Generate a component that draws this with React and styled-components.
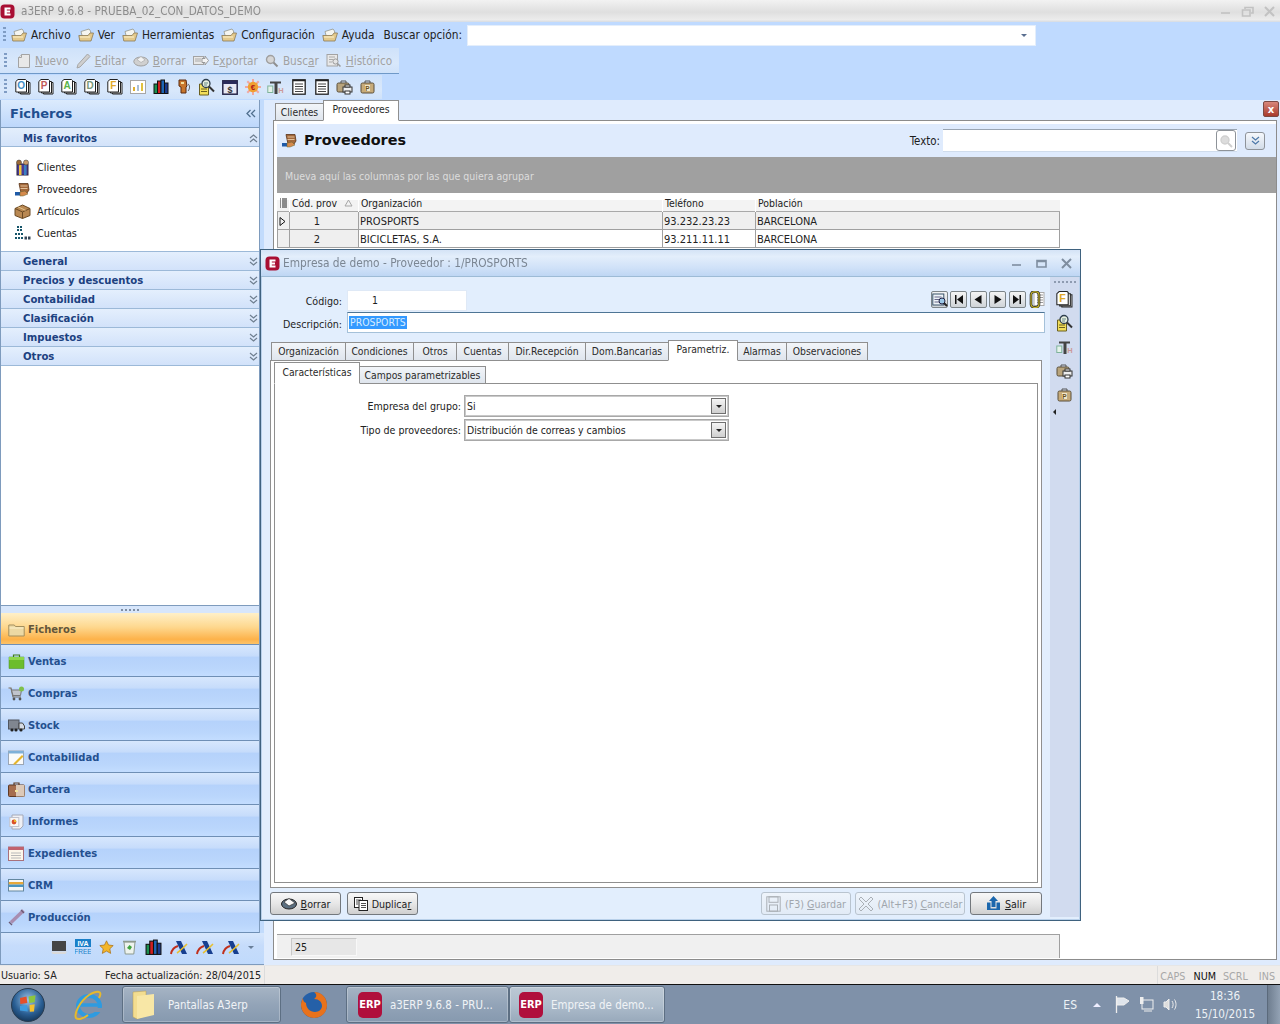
import React from 'react';
import styled, { createGlobalStyle } from 'styled-components';

const cond = `"DejaVu Sans Condensed","DejaVu Sans",sans-serif`;
const bold = `"DejaVu Sans",sans-serif`;

const Global = createGlobalStyle`
  html, body { margin: 0; padding: 0; width: 1280px; height: 1024px; overflow: hidden; }
  * { box-sizing: border-box; }
  #root { width: 1280px; height: 1024px; }
  svg { display: block; flex: none; }
`;

const Page = styled.div`
  width: 1280px; height: 1024px; display: flex; flex-direction: column;
  font-family: ${cond}; font-size: 10.3px; color: #1c1c1c; background: #bfdaff;
`;
const TitleBar = styled.div`
  height: 22px; display: flex; align-items: center; padding: 0 4px 0 0; gap: 6px;
  background: linear-gradient(#f2f2f2, #dfdfdf 55%, #ececec 90%, #d6dbe2);
  color: #8d8d8d; font-size: 11.6px;
`;
const TitleText = styled.span`flex: 1; filter: blur(.2px);`;
const DlgTitleText = styled.span`flex: 1; font-size: 11.8px; margin-left: -3px; filter: blur(.2px);`;
const WinCtl = styled.div`display: flex; align-items: center; gap: ${p => p.$gap || 9}px;`;

const Dock = styled.div`height: 78px; background: #bfdaff; display: flex; flex-direction: column; position: relative;`;
const MenuBar = styled.div`height: 26px; display: flex; align-items: center; padding-left: 3px; font-size: 11.8px; color: #222;`;
const Grip = styled.span`
  width: 3px; height: 16px; margin-right: ${p => p.$mr || 5}px; flex: none;
  background: repeating-linear-gradient(#7f9cc4 0 2px, transparent 2px 4px);
`;
const MenuItem = styled.span`display: flex; align-items: center; gap: 4px; margin-right: 7px; white-space: nowrap;`;
const MenuLabel = styled.span`margin: 0 5px 0 2px; white-space: nowrap;`;
const SearchBox = styled.div`
  width: 569px; height: 21px; background: #fff; border: 1px solid #e4eefb; display: flex;
  align-items: center; justify-content: flex-end; padding-right: 8px;
`;
const DownTri = styled.i`
  display: block; width: 0; height: 0; border: 3px solid transparent; border-top: 3px solid ${p => p.$c || '#5a6f90'}; border-bottom: 0;
`;
const ToolRow = styled.div`
  width: ${p => p.$w}px; height: ${p => p.$h}px; display: flex; align-items: center; padding-left: 4px;
  background: linear-gradient(#cfe2fa, #d9e8fb 60%, #cfe2fa); border-bottom: 1px solid ${p => p.$line};
  margin-top: ${p => p.$mt || 0}px; color: #a2a2a2; font-size: 11.7px;
`;
const ToolItem = styled.span`display: flex; align-items: center; gap: 4px; margin-right: 7px; white-space: nowrap;`;
const IconCell = styled.span`width: 23px; height: 18px; display: flex; align-items: center; justify-content: center;`;
const U = styled.span`text-decoration: underline;`;

const Main = styled.div`flex: 1; display: flex; position: relative; min-height: 0;`;

const Sidebar = styled.div`width: 264px; display: flex; flex-direction: column; background: #c2dbfc;`;
const SideInner = styled.div`width: 260px; flex: 1; display: flex; flex-direction: column; background: #fff; border-left: 1px solid #7e9bbd; border-right: 1px solid #7e9bbd; min-height: 0;`;
const SideHead = styled.div`
  height: 28px; display: flex; align-items: center; justify-content: space-between; padding: 0 3px 0 9px;
  background: linear-gradient(#dcebfd, #bdd7fb); border-bottom: 1px solid #7f9dc0;
  font: bold 13px ${bold}; color: #1f4f8f;
`;
const Group = styled.div`
  height: 19px; flex: none; display: flex; align-items: center; justify-content: space-between; padding: ${p => p.$open ? 2 : 0}px 1px 0 22px;
  background: ${p => p.$open ? 'linear-gradient(#e3eefc,#d3e3fa)' : 'linear-gradient(#e4effd,#d2e2fa)'};
  border-bottom: 1px solid #9cb9d8; font: bold 10.1px ${bold}; color: #1c4180;
`;
const FavList = styled.div`height: 105px; padding-top: 9px; flex: none; border-bottom: 1px solid #9cb9d8;`;
const FavItem = styled.div`height: 22px; display: flex; align-items: center; gap: 6px; padding-left: 13px; font-size: 10.8px; color: #222;`;
const Spacer = styled.div`flex: 1;`;
const Splitter = styled.div`
  height: 8px; flex: none; border-top: 1px solid #7e9bbd; background: #d7e6fb; display: flex; justify-content: center; align-items: center;
`;
const Dots = styled.span`width: 19px; height: 2px; background: repeating-linear-gradient(90deg, #7f8ea3 0 2px, transparent 2px 4px);`;
const NavItem = styled.div`
  height: 32px; flex: none; display: flex; align-items: center; gap: 3px; padding: 2px 0 0 6px;
  border-bottom: 1px solid #6f8fb5;
  background: ${p => p.$active
    ? 'linear-gradient(#fff0c8, #fed88f 45%, #fdb24a 85%, #fcc36a)'
    : 'linear-gradient(#d7e7fd, #c6dcfb 35%, #b5d2fb 40%, #bad6fc 75%, #c3ddff)'};
  font: bold 10px ${bold}; color: ${p => p.$active ? '#63553a' : '#24508f'};
`;
const NavIcon = styled.span`width: 18px; display: flex; justify-content: center;`;
const NavFoot = styled.div`
  width: 264px; height: 32px; flex: none; display: flex; align-items: center; padding: 0 0 3px 50px; gap: 8px;
  background: linear-gradient(#d7e7fd, #c6dcfb 40%, #c0dafc);
  border-left: 1px solid #7e9bbd; border-bottom: 1px solid #7e9bbd;
`;

const Content = styled.div`flex: 1; display: flex; flex-direction: column; background: #dfebfd; min-width: 0; position: relative;`;
const CloseRed = styled.div`
  position: absolute; right: 1px; top: 1px; width: 16px; height: 16px; border-radius: 2px; background: linear-gradient(#d8877a, #a93a2c);
  border: 1px solid #7b4a44; color: #fff; font: bold 10px ${bold}; display: flex; align-items: center; justify-content: center;
`;
const Tabs = styled.div`display: flex; align-items: flex-end; height: ${p => p.$h}px; flex: none; padding-left: ${p => p.$pl || 0}px; margin-top: ${p => p.$mt || 0}px; position: relative; z-index: 1; margin-bottom: -1px;`;
const Tab = styled.div`
  width: ${p => p.$w}px; height: ${p => p.$active ? p.$ah : p.$ih}px; display: flex; align-items: center; justify-content: center;
  border: 1px solid #8f8f8f; margin-left: -1px; position: relative; z-index: ${p => p.$active ? 2 : 0};
  background: ${p => p.$active ? '#fff' : 'linear-gradient(#f2f5f9,#dfe5ed)'};
  border-bottom: ${p => p.$active ? '1px solid #fff' : '1px solid #8f8f8f'};
  padding-bottom: ${p => p.$active ? 3 : (p.$ib || 0)}px; white-space: nowrap; color: #2b2b2b; font-size: 10.3px;
`;
const Panel = styled.div`
  flex: 1; margin: 0 3px 5px 9px; border: 1px solid #8c8c8c; background: #fff; padding: 3px 0 1px 3px; display: flex; flex-direction: column; min-height: 0;
`;
const ListHead = styled.div`height: 33px; flex: none; background: #dfebfd; display: flex; align-items: center; padding-left: 4px; position: relative;`;
const ListTitle = styled.div`font: bold 14.4px ${bold}; color: #101010; margin-left: 6px; flex: 1; padding-bottom: 2px;`;
const TextLabel = styled.span`font-size: 11.4px; margin-right: 3px;`;
const TextInput = styled.div`
  width: 294px; height: 23px; background: #fff; border-top: 1px solid #9aa5b2; border-bottom: 1px solid #cfdcec; display: flex; justify-content: flex-end; align-items: center; padding-right: 1px;
`;
const MiniBtn = styled.div`
  width: ${p => p.$w}px; height: ${p => p.$h}px; border: 1px solid #8e9399; border-radius: 3px; display: flex; align-items: center; justify-content: center;
  background: ${p => p.$plain ? '#fff' : 'linear-gradient(#f5f8fc,#d2dce8)'}; margin-left: ${p => p.$ml || 0}px; margin-right: ${p => p.$mr || 0}px;
`;
const GroupBand = styled.div`height: 36px; flex: none; background: #a0a0a0; color: #dcdcdc; display: flex; align-items: center; padding: 2px 0 0 8px; font-size: 10.5px;`;
const GridArea = styled.div`flex: 1; display: flex; flex-direction: column; width: 783px; min-height: 0;`;
const GridHead = styled.div`
  display: grid; grid-template-columns: 12px 69px 304px 93px 305px; height: 19px; flex: none; align-items: end;
  background: linear-gradient(#fff 0 7px, #f3f3f3 7px); border-bottom: 1px solid #a9a9a9; font-size: 10.4px; color: #222;
`;
const HeadCell = styled.div`
  height: 19px; display: flex; align-items: center; justify-content: ${p => p.$between ? 'space-between' : 'flex-start'};
  padding: 0 ${p => p.$between ? 5 : 0}px 0 2px; border-left: ${p => p.$noline ? 0 : '1px solid #fff'}; white-space: nowrap; overflow: hidden;
`;
const Row = styled.div`
  display: grid; grid-template-columns: 12px 69px 304px 93px 305px; height: 18px; flex: none; background: ${p => p.$sel ? '#efefef' : '#fff'};
  border-bottom: 1px solid #a0a0a0; border-right: 1px solid #a0a0a0; font-size: 11px; color: #222;
`;
const Cell = styled.div`
  border-left: 1px solid #a0a0a0; display: flex; align-items: center; padding: 2px ${p => p.$center ? 14 : 0}px 0 ${p => p.$center ? 0 : 1}px; white-space: nowrap;
  justify-content: ${p => p.$center ? 'center' : 'flex-start'}; background: ${p => p.$grey ? '#efefef' : 'transparent'};
`;
const GridFoot = styled.div`
  margin-top: auto; height: 24px; flex: none; background: #f0f0f0; border-top: 1px solid #a0a0a0; border-right: 1px solid #a0a0a0; padding: 3px 0 0 14px;
`;
const SumCell = styled.div`width: 66px; height: 18px; background: #e7e7e7; border: 1px solid #c8c8c8; border-right-color: #f8f8f8; border-bottom-color: #f8f8f8; padding-left: 3px; line-height: 16px; font-size: 10.6px;`;

const Dialog = styled.div`
  position: absolute; left: 260px; top: 149px; width: 821px; height: 672px; display: flex; flex-direction: column;
  border: 1px solid #3f627f; background: #e2eefd; box-shadow: inset 0 0 0 1px #b8d0ea; z-index: 5;
`;
const DlgTitle = styled.div`
  height: 27px; flex: none; display: flex; align-items: center; padding: 0 7px 0 4px; gap: 6px;
  background: linear-gradient(#d4e3f6, #e3eefb 25%, #cfe1f8 70%, #bed6f4); border-bottom: 1px solid #9dbbd6;
  color: #7b8693;
`;
const DlgBody = styled.div`flex: 1; display: flex; min-height: 0;`;
const Form = styled.div`flex: 1; display: flex; flex-direction: column; padding: 13px 5px 0 9px; min-width: 0;`;
const CodeRow = styled.div`display: flex; align-items: center; height: 21px; margin-left: -9px;`;
const FieldLabel = styled.label`width: ${p => p.$w}px; flex: none; text-align: right; padding-right: 5px; padding-top: ${p => p.$pt || 0}px; font-size: 10.6px; color: #222;`;
const CodeInput = styled.div`width: 120px; height: 21px; background: #fff; border: 1px solid #dfe9f6; padding-left: 24px; line-height: 19px; font-size: 10.4px;`;
const NavBtns = styled.div`margin-left: auto; margin-top: -2px; display: flex; align-items: center; gap: 2.4px;`;
const NavBtn = styled.div`
  width: 17px; height: 17px; border: 1px solid #7d8589; border-radius: 2px; background: linear-gradient(#f4f4f4,#cfd4d8); display: flex; align-items: center; justify-content: center;
`;
const DescRow = styled.div`display: flex; align-items: center; height: 21px; margin: 1px 0 0 -9px;`;
const DescInput = styled.div`flex: 1; height: 21px; background: #fff; border: 1px solid #a5c1d9; border-top-color: #4e7595; padding-left: 1px; display: flex; align-items: center; font-size: 10.4px;`;
const Sel = styled.span`background: #3399ff; color: #d6ecff; padding: 0 1px; height: 13px; line-height: 13px;`;
const TabPanel = styled.div`
  width: 772px; height: 528px; flex: none; border: 1px solid #8f8f8f; background: #fff; padding: 1px 3px 4px 3px; display: flex; flex-direction: column;
`;
const InnerBox = styled.div`flex: 1; border: 1px solid #8f8f8f; padding: 11px 0 0 0; position: relative;`;
const FieldRow = styled.div`display: flex; align-items: center; height: 22px; margin-bottom: 2px;`;
const Combo = styled.div`
  width: 265px; height: 22px; border: 2px solid #c9c9c9; outline: 1px solid #a8a8a8; outline-offset: -1px; background: #fff;
  margin-left: -2px; display: flex; align-items: center; justify-content: space-between; padding: 0 1px 0 1px; font-size: 10.4px; color: #222;
`;
const ComboBtn = styled.div`
  width: 15px; height: 16px; border: 1px solid #6f6f6f; background: linear-gradient(#f5f5f5,#cfcfcf); display: flex; align-items: center; justify-content: center;
`;
const BtnRow = styled.div`display: flex; margin-top: 4px; width: 772px; align-items: center;`;
const Btn = styled.div`
  width: ${p => p.$w}px; height: 23px; flex: none; border: 1px solid ${p => p.$off ? '#b9c4cf' : '#73787d'}; border-radius: 3px; margin-left: ${p => p.$ml || 0}px;
  background: ${p => p.$off ? 'linear-gradient(#eef4fb,#e2ebf6)' : 'linear-gradient(#f8f8f8,#e7e7e7 50%,#cfcfcf)'}; color: ${p => p.$off ? '#a0a6ad' : '#222'};
  display: flex; align-items: center; justify-content: center; gap: 4px; font-size: 10.6px; white-space: nowrap;
`;
const DlgTools = styled.div`
  width: 29px; flex: none; background: #d1dbef; margin: 0 1px 3px 0; display: flex; flex-direction: column; align-items: center; padding-top: 2px; position: relative;
`;
const DlgDots = styled.span`width: 22px; height: 2px; margin: 2px 0 4px; background: repeating-linear-gradient(90deg, #8e9bb0 0 2px, transparent 2px 4px);`;
const DlgTool = styled.div`height: 24px; display: flex; align-items: center; justify-content: center;`;
const LeftTri = styled.i`
  display: block; width: 0; height: 0; align-self: flex-start; margin: 2px 0 0 3px; border: 3px solid transparent; border-right: 3px solid #222; border-left: 0;
`;

const Status = styled.div`
  height: 20px; flex: none; display: flex; align-items: center; background: #f0edea; border-top: 1px solid #e6e6e6; font-size: 10.7px; color: #222; border-bottom: 1px solid #111;
`;
const StatusCell = styled.span`width: ${p => p.$w}px; padding-left: ${p => p.$pl ?? 1}px; white-space: nowrap; height: 18px; line-height: 20px; border-right: 1px solid ${p => p.$line || 'transparent'};`;
const StatusKey = styled.span`margin-left: ${p => p.$ml || 0}px; margin-right: ${p => p.$mr || 0}px; padding-top: 2px; color: ${p => p.$on ? '#111' : '#a8a8a8'}; white-space: nowrap;`;
const StatusGap = styled.span`flex: 1; height: 18px; border-right: 1px solid #dcdcdc;`;

const Taskbar = styled.div`height: 39px; flex: none; background: #7f91a9; display: flex; align-items: center; position: relative; color: #eef2f6; font-size: 11.4px;`;
const Slot = styled.div`width: ${p => p.$w}px; flex: none; display: flex; justify-content: center;`;
const TaskBtn = styled.div`
  width: ${p => p.$w}px; height: 37px; flex: none; display: flex; align-items: center; gap: ${p => p.$gap}px; padding-left: ${p => p.$pl}px;
  background: ${p => p.$on ? 'linear-gradient(#bcc8d4,#aebdcc 50%,#98a9bb)' : 'linear-gradient(#a6b4c4,#93a4b8 50%,#8699af)'};
  border: 1px solid #5d6f83; border-radius: 3px; box-shadow: inset 0 0 0 1px rgba(255,255,255,.25); white-space: nowrap; color: #f0f3f6;
`;
const ErpTile = styled.span`
  width: 24px; height: 26px; border-radius: 5px; background: #b00f3c; color: #fff; font: bold 11px ${cond}; display: flex; align-items: center; justify-content: center;
`;
const Tray = styled.div`margin-left: auto; display: flex; align-items: center; height: 100%;`;
const Lang = styled.span`margin-right: 16px; font-size: 12px;`;
const UpTri = styled.i`display: block; width: 0; height: 0; border: 4px solid transparent; border-bottom: 4px solid #eef; border-top: 0; margin-right: 14px;`;
const Clock = styled.div`width: 70px; margin-left: 12px; text-align: center; line-height: 18px; font-size: 11.6px; margin-right: 7px;`;
const ShowDesk = styled.div`width: 13px; height: 39px; background: linear-gradient(90deg,#6f7e90,#93a2b4); border-left: 1px solid #5b6a7c;`;

/* ---- drawn icons ---- */
const Logo = () => (
  <svg width="15" height="15" viewBox="0 0 15 15"><rect x=".5" y=".5" width="14" height="14" rx="4" fill="#a90f33"/><path d="M4.500 3.500h6v2H6.800v1.100h3.200v1.800H6.800v1.100h3.700v2h-6z" fill="#fff"/></svg>
);
const Ctl = ({ k, c = '#c2c2c2' }) => (
  <svg width="13" height="11" viewBox="0 0 13 11" stroke={c} fill="none" strokeWidth="1.600">
    {k === 'min' && <path d="M2 7h9"/>}
    {k === 'max' && <path d="M2 2.500h9v6.500H2zM2 3.500h9" />}
    {k === 'res' && <path d="M1.500 4h7.500v6h-7.500zM4 3V1.500h8v5.500h-2"/>}
    {k === 'x' && <path d="M2 1l9 9M11 1l-9 9" strokeWidth="2"/>}
  </svg>
);
const FolderOpen = () => (
  <svg width="16" height="15" viewBox="0 0 16 15"><path d="M3 3.500l8-2.500 1.500 2 .5 3-8 5z" fill="#f5f5f0" stroke="#8b8b7b" strokeWidth=".7"/><path d="M.8 7.500h9.200l2-2.500h3.500L13 13H1.800z" fill="#e3c98c" stroke="#8c7a55" strokeWidth=".8"/><path d="M2 9h10" stroke="#fff3cf" strokeWidth="1"/></svg>
);
const Gray = { stroke: '#a3a3a3', fill: '#e8e8e8', strokeWidth: 1 };
const TNuevo = () => <svg width="15" height="16" viewBox="0 0 15 16"><path d="M5.500 1.500h8v13h-11v-10z" {...Gray}/><path d="M2.500 4.500h3v-3" {...Gray}/></svg>;
const TEditar = () => <svg width="15" height="16" viewBox="0 0 15 16"><path d="M11.500 1l2.500 2.500L4 14l-3 1 1-3.500z" fill="#cfcfcf" stroke="#a6a6a6"/></svg>;
const TBorrar = () => <svg width="16" height="14" viewBox="0 0 16 14"><ellipse cx="8" cy="7.500" rx="7.200" ry="4.500" fill="#d0d0d0" stroke="#a0a0a0"/><path d="M4 5.500l4-3 4 3.500-4 2.500z" fill="#f2f2f2" stroke="#aaa" strokeWidth=".7"/></svg>;
const TExportar = () => <svg width="16" height="13" viewBox="0 0 16 13"><rect x=".5" y="2.500" width="10" height="8" {...Gray}/><path d="M2 5h6M2 7h6" stroke="#aaa"/><path d="M9 4.500h3V2l3.500 4.500L12 11V8.500H9z" fill="#f4f4f4" stroke="#999"/></svg>;
const TBuscar = () => <svg width="14" height="14" viewBox="0 0 14 14"><circle cx="5.500" cy="5.500" r="4" fill="#d5d5d5" stroke="#a0a0a0" strokeWidth="1.400"/><path d="M8.500 8.500l4 4" stroke="#8f8f8f" strokeWidth="2"/></svg>;
const THistorico = () => <svg width="16" height="15" viewBox="0 0 16 15"><rect x="1" y="1.500" width="10.500" height="11.500" {...Gray}/><path d="M3 4h6M3 6.500h4M3 9h3" stroke="#aaa"/><circle cx="9.500" cy="8.500" r="2.600" fill="#e5e5e5" stroke="#999"/><path d="M11.500 10.500l3 3" stroke="#999" strokeWidth="1.500"/></svg>;

const DocStack = ({ l, c = '#555', size = 16 }) => (
  <svg width={size} height={size} viewBox="0 0 16 16">
    <path d="M7 3.500h8v11.500H5.500V3.500z" fill="#fff" stroke="#222"/>
    <path d="M5 2.500h8.500V14H3.500V2.500z" fill="#fff" stroke="#222"/>
    <path d="M3 .5h7.500l1 1V13H.8V2.500z" fill="#fff" stroke="#222"/>
    <text x="6.200" y="10.300" fontSize="10" fontWeight="700" textAnchor="middle" fontFamily="Liberation Sans, sans-serif" fill={c}>{l}</text>
  </svg>
);
const MiniChart = () => <svg width="16" height="14" viewBox="0 0 16 14"><rect x=".5" y=".5" width="15" height="13" fill="#fff" stroke="#a7a7a7"/><path d="M4 11V7" stroke="#e0b030" strokeWidth="2"/><path d="M8 11V5" stroke="#a9bfd8" strokeWidth="2"/><path d="M12 11V3" stroke="#e0c040" strokeWidth="2"/></svg>;
const Books = ({ size = 16 }) => <svg width={size} height={size} viewBox="0 0 16 16"><rect x="1" y="5" width="3.500" height="9.500" fill="#1a8f50" stroke="#111"/><rect x="4.500" y="2" width="3.500" height="12.500" fill="#d02020" stroke="#111"/><rect x="8" y="1" width="3.500" height="13.500" fill="#1f66b5" stroke="#111"/><rect x="11.500" y="4" width="3.500" height="10.500" fill="#1a3a8c" stroke="#111"/></svg>;
const Pump = () => <svg width="14" height="16" viewBox="0 0 14 16"><path d="M2 1h7l1 6-1 1v6H4V8L2 7z" fill="#c8762c" stroke="#5a2a10"/><rect x="4" y="3" width="3" height="2" fill="#f4e0a0"/><path d="M11 5c2 1 2 5 0 7" stroke="#555" fill="none"/></svg>;
const DocSearch = ({ size = 18 }) => <svg width={size} height={size} viewBox="0 0 18 18"><path d="M1.500 6h9v11h-9z" fill="#f2de5a" stroke="#6b6020"/><path d="M3 11h6M3 13.500h6" stroke="#6b6020"/><circle cx="8" cy="5.500" r="4" fill="#e8f0e0" stroke="#2f3f4f" strokeWidth="1.300"/><path d="M6 5h4M6 7h3" stroke="#688"/><path d="M11 8.500l5 5" stroke="#333" strokeWidth="2"/></svg>;
const DollarDoc = () => <svg width="16" height="15" viewBox="0 0 16 15"><rect x=".8" y=".8" width="14.400" height="13.400" fill="#e8e8f4" stroke="#26264a" strokeWidth="1.500"/><rect x="1" y="1" width="14" height="3" fill="#2a2a5a"/><text x="8" y="12.500" fontSize="9" fontWeight="700" textAnchor="middle" fontFamily="Liberation Sans, sans-serif" fill="#333">$</text></svg>;
const EuroGear = () => <svg width="16" height="16" viewBox="0 0 16 16"><g stroke="#f0a8a0" strokeWidth="2"><path d="M8 0v16M0 8h16M2.300 2.300l11.400 11.400M13.700 2.300L2.300 13.700"/></g><circle cx="8" cy="8" r="5.200" fill="#f0a030"/><text x="8" y="11" fontSize="8" fontWeight="700" textAnchor="middle" fontFamily="Liberation Sans, sans-serif" fill="#b01818">€</text></svg>;
const Dth = ({ size = 17 }) => <svg width={size} height={size} viewBox="0 0 17 15"><path d="M3 1.500h11v2h-3.500V14h-3V3.500H3z" fill="#444"/><rect x=".8" y="6" width="5" height="6.500" fill="#e5f2ea" stroke="#7fb39b"/><text x="14" y="12.500" fontSize="7.500" fontWeight="700" textAnchor="middle" fontFamily="Liberation Sans, sans-serif" fill="#c99">H</text></svg>;
const Lines = () => <svg width="14" height="16" viewBox="0 0 14 16"><rect x=".8" y=".8" width="12.400" height="14.400" fill="#fff" stroke="#222" strokeWidth="1.300"/><path d="M.8 1.500h12.400" stroke="#222" strokeWidth="1.500"/><path d="M3 5h8M3 7.500h8M3 10h8M3 12.500h8" stroke="#444"/></svg>;
const BagPrint = () => <svg width="17" height="16" viewBox="0 0 17 16"><path d="M5 4V2h5v2" fill="none" stroke="#555"/><rect x="1" y="4" width="12" height="9" rx="1.500" fill="#b9a47c" stroke="#5a4f3a"/><rect x="7" y="8" width="9" height="5" fill="#eee" stroke="#333"/><rect x="9" y="6" width="5" height="2" fill="#fff" stroke="#333"/><rect x="9" y="12" width="5" height="3" fill="#fff" stroke="#333"/></svg>;
const BagP = () => <svg width="15" height="14" viewBox="0 0 15 14"><path d="M5 3V1h5v2" fill="none" stroke="#555"/><rect x="1" y="3" width="13" height="10" rx="1.500" fill="#c7ab7a" stroke="#5a4f3a"/><rect x="5" y="5" width="5" height="6" fill="#f1e7c8"/><text x="7.500" y="10.500" fontSize="6.500" fontWeight="700" textAnchor="middle" fontFamily="Liberation Sans, sans-serif" fill="#6a5020">P</text></svg>;
const Chevrons = ({ up, c = '#6f7f90' }) => (
  <svg width="9" height="9" viewBox="0 0 9 9" fill="none" stroke={c} strokeWidth="1.200" style={up ? { transform: 'rotate(180deg)' } : undefined}><path d="M1 1l3.500 3L8 1M1 5l3.500 3L8 5"/></svg>
);
const LeftChev = () => <svg width="10" height="9" viewBox="0 0 10 9" fill="none" stroke="#51708f" strokeWidth="1.300"><path d="M4.500 1L1 4.500l3.500 3.500M9 1L5.500 4.500 9 8"/></svg>;

const IcoClientes = () => <svg width="17" height="17" viewBox="0 0 17 17"><rect x="3" y="5" width="11" height="11" fill="#4a3c98" stroke="#2c2340"/><rect x="5" y="6" width="2.500" height="10" fill="#f1c23a"/><rect x="10" y="6" width="2.500" height="10" fill="#3a80c0"/><circle cx="5" cy="3.500" r="2.500" fill="#9c6a3a" stroke="#333" strokeWidth=".5"/><circle cx="12" cy="3.500" r="2.500" fill="#c99a6a" stroke="#333" strokeWidth=".5"/></svg>;
const IcoProv = () => <svg width="17" height="15" viewBox="0 0 17 15"><path d="M5 1.500h9l1 6.500-2 3H7z" fill="#a3683a" stroke="#5a3418" strokeWidth=".8"/><path d="M6.500 4h7M6.500 6.500h7" stroke="#e3c09a"/><path d="M1 10h5v3.500H1z" fill="#1e5aa8"/><path d="M6 10l5-1 3 3-5 2H6z" fill="#d68a4c" stroke="#663" strokeWidth=".5"/></svg>;
const IcoArt = () => <svg width="17" height="15" viewBox="0 0 17 15"><path d="M1 4.500L8.500 1 16 4.500v7L8.500 14.500 1 11.500z" fill="#b98852" stroke="#6b4a24"/><path d="M1 4.500l7.500 3.500L16 4.500M8.500 8v6.500" fill="none" stroke="#6b4a24"/><path d="M4 2.800l7.500 3.500" stroke="#e5c58e"/></svg>;
const IcoCuentas = () => <svg width="17" height="16" viewBox="0 0 17 16" fill="#16556a"><path d="M3 1h2v2H3zM6 1h2v2H6zM3 4h2v2H3zM6 4h2v2H6zM1 8h2v2H1zM4 8h2v2H4zM7 8h2v2H7zM1 12h2v2H1zM4 12h2v2H4zM7 12h2v2H7z"/><path d="M10.500 11.500h2.500v3h-2.500zM14 11.500h2.500v3H14z" fill="#345"/></svg>;

const nav = {
  folder: <svg width="17" height="14" viewBox="0 0 17 14"><path d="M.8 2h5.500l1.200 1.500h8.700V13H.8z" fill="#ecd9a4" stroke="#a38f5e"/><path d="M1.500 5h14" stroke="#fbf0cc"/></svg>,
  bag: <svg width="17" height="15" viewBox="0 0 17 15"><path d="M1 3h15v11.500H1z" fill="#6cbd2c" stroke="#4a8f1c" strokeWidth=".5"/><path d="M5.500 4V1h6v3" fill="none" stroke="#3f7d15" strokeWidth="1.200"/><path d="M1 3h15v3H1z" fill="#8ed64a"/></svg>,
  cart: <svg width="17" height="15" viewBox="0 0 17 15"><path d="M.5 2h2.500l2 9h8" fill="none" stroke="#7a6f60" strokeWidth="1.200"/><path d="M3.500 4h10l-1 5.500H5z" fill="#c0c4cc" stroke="#777"/><circle cx="6" cy="13" r="1.400" fill="#555"/><circle cx="12" cy="13" r="1.400" fill="#555"/><circle cx="13.500" cy="3" r="2.500" fill="#7fc04a"/></svg>,
  truck: <svg width="17" height="13" viewBox="0 0 17 13"><rect x=".5" y="1" width="10.500" height="9" fill="#808690" stroke="#50555f"/><path d="M11 4h3.500L16.500 7v3H11z" fill="#d5dbe5" stroke="#444"/><circle cx="4" cy="11" r="1.600" fill="#222"/><circle cx="8" cy="11" r="1.600" fill="#222"/><circle cx="13" cy="11" r="1.600" fill="#222"/></svg>,
  pad: <svg width="17" height="15" viewBox="0 0 17 15"><rect x=".5" y="1" width="15" height="13.500" fill="#fafafa" stroke="#9ba6b4"/><path d="M.5 1h15v2.500H.5z" fill="#7fb0d8"/><path d="M6 13l8-8 1.500 1.500-8 8H5z" fill="#e5b52c"/></svg>,
  brief: <svg width="17" height="15" viewBox="0 0 17 15"><path d="M6 3V1h5v2" fill="none" stroke="#5d3a24" strokeWidth="1.200"/><rect x=".5" y="3" width="16" height="11.500" rx="1" fill="#a56d4e" stroke="#5f3a24"/><rect x="8" y="3" width="8.500" height="11.500" fill="#dcc9b8"/><rect x="7" y="8" width="3" height="2" fill="#f4e6a0"/></svg>,
  report: <svg width="15" height="16" viewBox="0 0 15 16"><path d="M3 1h11v11l-3 3H3z" fill="#eff0f5" stroke="#a5a9b7"/><rect x=".8" y="3.500" width="9" height="9" fill="#f7f7f7" stroke="#c2c2cc"/><circle cx="5" cy="8" r="2.400" fill="#d9502c"/><path d="M5 8V5.600A2.400 2.400 0 0 1 7.400 8z" fill="#e9b62c"/></svg>,
  cal: <svg width="16" height="15" viewBox="0 0 16 15"><rect x=".5" y="1" width="15" height="13.500" fill="#fdf7ea" stroke="#a8717c"/><rect x=".5" y="1" width="15" height="3" fill="#c1626e"/><path d="M3 7h10M3 9.500h10M3 12h10" stroke="#b8b8b8"/></svg>,
  crm: <svg width="17" height="13" viewBox="0 0 17 13"><rect x=".5" y=".5" width="15" height="11.500" fill="#f8f8f8" stroke="#63879f"/><rect x=".8" y="3" width="14.500" height="2.500" fill="#e9a83a"/><rect x=".8" y="5.500" width="14.500" height="2.500" fill="#4a93c2"/></svg>,
  wrench: <svg width="17" height="17" viewBox="0 0 17 17"><path d="M15.500 1.500L3 13.500" stroke="#a88db0" strokeWidth="3.400"/><path d="M13 1l3 3M1 13l3 3" stroke="#6d5a74" strokeWidth="1.400"/></svg>,
};
const Monitor = () => <svg width="16" height="15" viewBox="0 0 16 15"><rect x="1" y="1" width="14" height="10" fill="#454545"/><path d="M0 11.500h16L14.500 14h-13z" fill="#dadada"/></svg>;
const IvaFree = () => <svg width="16" height="16" viewBox="0 0 16 16"><rect width="16" height="8" fill="#1a7fc8"/><text x="8" y="7" fontSize="7" fontWeight="700" textAnchor="middle" fontFamily="Liberation Sans, sans-serif" fill="#fff">IVA</text><text x="8" y="15" fontSize="6.500" textAnchor="middle" fontFamily="Liberation Sans, sans-serif" fill="#1a7fc8">FREE</text></svg>;
const Star = () => <svg width="15" height="14" viewBox="0 0 15 14"><path d="M7.500.8l2 4.200 4.700.6-3.400 3.200.9 4.600-4.200-2.300-4.200 2.300.9-4.600L.8 5.600l4.700-.6z" fill="#f3b62b" stroke="#a86d12" strokeWidth=".7"/></svg>;
const Recycle = () => <svg width="15" height="16" viewBox="0 0 15 16"><path d="M2 3h11l-1.200 12H3.200z" fill="#eef3ee" stroke="#8d9a8e"/><path d="M1 2.500h13" stroke="#8d9a8e" strokeWidth="1.500"/><path d="M5 9l2.500-3L10 8l-2 3z" fill="#3fa43f"/></svg>;
const Aeat = () => <svg width="18" height="15" viewBox="0 0 18 15"><path d="M6 1h5l6 13h-5z" fill="#173f8f"/><path d="M1 14c1-5 3-7 7-8" fill="none" stroke="#c0301c" strokeWidth="2"/><path d="M7 13c3-2 6-5 10-9" fill="none" stroke="#e8c030" strokeWidth="1.600"/></svg>;

const Orb = () => <svg width="34" height="34" viewBox="0 0 34 34"><defs><radialGradient id="o" cx=".5" cy=".35" r=".7"><stop offset="0" stopColor="#9fc4e6"/><stop offset=".6" stopColor="#2a5f94"/><stop offset="1" stopColor="#12304f"/></radialGradient></defs><circle cx="17" cy="17" r="16.500" fill="url(#o)" stroke="#2a3c50"/><path d="M9 10l6.500-1.500.8 6.500-7 1z" fill="#e5502a"/><path d="M17.500 8.500l7-1.200-.8 7-5.500.7z" fill="#8cc63e"/><path d="M9 18l7-1 .8 6.500-7.800-1z" fill="#3d9ce0"/><path d="M18.500 17l5.200-.7-.7 7.200-4.200.3z" fill="#f5c12e"/></svg>;
const Ie = () => <svg width="32" height="32" viewBox="0 0 32 32"><ellipse cx="16" cy="17" rx="11" ry="10" fill="none" stroke="#2e9be0" strokeWidth="4"/><path d="M6 16h20" stroke="#2e9be0" strokeWidth="3.500"/><rect x="17" y="19" width="12" height="4" fill="#7f91a9"/><path d="M26 9C30 2 25 1 16 6 6 13 1 25 3 29c2 2 7 1 12-3" fill="none" stroke="#e6b92c" strokeWidth="2"/></svg>;
const BigFolder = () => <svg width="24" height="30" viewBox="0 0 24 30"><path d="M1 2l13-1v25l-9 3-4-2z" fill="#f3dd90" stroke="#b89d50" strokeWidth=".5"/><path d="M5 6l17-2v21L5 29z" fill="#f8e7a6"/></svg>;
const Fox = () => <svg width="28" height="30" viewBox="0 0 28 30"><circle cx="14" cy="15" r="13" fill="#2560a8"/><path d="M14 2C22 2 27 8 27 15c0 8-6 13-13 13C7 28 1 22 1 15c0-3 1-5 2-7 0 3 1 4 3 5 0 5 4 9 9 9 4 0 7-3 7-6 0-4-3-7-8-7 3-2 3-5 0-7z" fill="#e8721c"/></svg>;
const Flag = () => <svg width="15" height="17" viewBox="0 0 15 17"><path d="M1.500 0v17" stroke="#eee" strokeWidth="1.300"/><path d="M2 2h7l5 3-5 4H2z" fill="#dfe5ec" stroke="#eee"/></svg>;
const Net = () => <svg width="15" height="17" viewBox="0 0 15 17"><rect x="3" y="4" width="11" height="9" fill="none" stroke="#f0f0f0"/><rect x="1" y="1" width="3.500" height="7" fill="#eee"/><path d="M5 15h8" stroke="#eee"/></svg>;
const Spk = () => <svg width="15" height="15" viewBox="0 0 15 15" fill="none" stroke="#eee"><path d="M1 5h2l3-3v11l-3-3H1z" fill="#ddd"/><path d="M9 4c1.500 2 1.500 5 0 7M11.500 2.500c2 3 2 7 0 10"/></svg>;

const DocSmall = () => <svg width="16" height="15" viewBox="0 0 16 15"><rect x=".8" y="2" width="11" height="11" fill="#eef4f8" stroke="#38536a"/><path d="M2.500 5h7M2.500 7.500h5M2.500 10h5" stroke="#668"/><circle cx="10" cy="9" r="3" fill="#9bc8e8" stroke="#224"/><path d="M12 11l3 3" stroke="#222" strokeWidth="2"/></svg>;
const First = () => <svg width="10" height="9" viewBox="0 0 10 9" fill="#111"><path d="M1 0h1.500v9H1zM9 0v9L3 4.500z"/></svg>;
const Prev = () => <svg width="8" height="9" viewBox="0 0 8 9" fill="#111"><path d="M7.500 0v9L.5 4.500z"/></svg>;
const Next = () => <svg width="8" height="9" viewBox="0 0 8 9" fill="#111"><path d="M.5 0v9l7-4.500z"/></svg>;
const Last = () => <svg width="10" height="9" viewBox="0 0 10 9" fill="#111"><path d="M9 0H7.500v9H9zM1 0v9l6-4.500z"/></svg>;
const Clip = () => <svg width="17" height="17" viewBox="0 0 17 17"><rect x="6" y="1.500" width="10" height="13" fill="#fff" stroke="#aaa"/><path d="M9 4h6M9 6.500h6M9 9h6M9 11.500h6" stroke="#999"/><rect x="3" y=".8" width="8" height="15.500" rx="3" fill="none" stroke="#222" strokeWidth="2.600"/><rect x="3" y=".8" width="8" height="15.500" rx="3" fill="none" stroke="#c5b52a" strokeWidth="1.200"/></svg>;
const BtnTrash = () => <svg width="16" height="13" viewBox="0 0 16 13"><ellipse cx="8" cy="7" rx="7.500" ry="5" fill="#5b6f80" stroke="#222"/><path d="M3 5l5-3.500L14 6 8 9z" fill="#fafafa" stroke="#333" strokeWidth=".7"/></svg>;
const BtnCopy = () => <svg width="14" height="14" viewBox="0 0 14 14" fill="#fff" stroke="#222"><rect x=".5" y=".5" width="8" height="10"/><rect x="5" y="3.500" width="8.500" height="10"/><path d="M2 3h5M2 5h2M2 7h2M7 6.500h5M7 8.500h5M7 10.500h5" strokeWidth=".8"/></svg>;
const BtnSave = () => <svg width="15" height="16" viewBox="0 0 15 16" fill="none" stroke="#aab0b6"><rect x=".8" y=".8" width="13.400" height="14.400"/><rect x="3" y=".8" width="9" height="5.500"/><rect x="3.500" y="9" width="8" height="6.200"/></svg>;
const BtnCancel = () => <svg width="16" height="16" viewBox="0 0 16 16" fill="none" stroke="#aab0b6"><path d="M3 1l5 5 5-5 2 2-5 5 5 5-2 2-5-5-5 5-2-2 5-5-5-5z"/></svg>;
const BtnExit = () => <svg width="15" height="15" viewBox="0 0 15 15"><path d="M1 6.500h3.500v6h6v-6H14V14H1z" fill="#1b67ad"/><path d="M7.500 0l4.500 5H9.500v6h-4V5H3z" fill="#1b67ad"/></svg>;

const Sort = () => <svg width="9" height="8" viewBox="0 0 9 8" fill="none" stroke="#a7a7a7"><path d="M4.500 1L8 7H1z"/></svg>;
const GridMenu = () => <svg width="9" height="10" viewBox="0 0 9 10"><path d="M1 1h1M3 1h5M1 3h1M3 3h5M1 5h1M3 5h5M1 7h1M3 7h5M1 9h1M3 9h5" stroke="#222"/></svg>;
const RowMark = () => <svg width="7" height="9" viewBox="0 0 7 9" fill="none" stroke="#111"><path d="M1 .5v8L6 4.500z"/></svg>;
const Mag = () => <svg width="14" height="14" viewBox="0 0 14 14"><circle cx="6" cy="6" r="4" fill="#dcdcdc" stroke="#d0d0d0" strokeWidth="1.400"/><path d="M9 9l4 4" stroke="#cfcfcf" strokeWidth="2"/></svg>;

const menus = ['Archivo', 'Ver', 'Herramientas', 'Configuración', 'Ayuda'];
const tools = [
  <DocStack l="O" c="#3f8fc8" />, <DocStack l="P" c="#c25a5a" />, <DocStack l="A" c="#5ab34a" />, <DocStack l="D" c="#7a9a7a" />, <DocStack l="F" c="#e0a828" />,
  <MiniChart />, <Books />, <Pump />, <DocSearch />, <DollarDoc />, <EuroGear />, <Dth />, <Lines />, <Lines />, <BagPrint />, <BagP />,
];
const groups = ['General', 'Precios y descuentos', 'Contabilidad', 'Clasificación', 'Impuestos', 'Otros'];
const favs = [['Clientes', <IcoClientes />], ['Proveedores', <IcoProv />], ['Artículos', <IcoArt />], ['Cuentas', <IcoCuentas />]];
const navs = [['Ficheros', 'folder'], ['Ventas', 'bag'], ['Compras', 'cart'], ['Stock', 'truck'], ['Contabilidad', 'pad'], ['Cartera', 'brief'], ['Informes', 'report'], ['Expedientes', 'cal'], ['CRM', 'crm'], ['Producción', 'wrench']];
const dlgTabs = [['Organización', 75], ['Condiciones', 69], ['Otros', 44], ['Cuentas', 53], ['Dir.Recepción', 78], ['Dom.Bancarias', 84], ['Parametriz.', 70, true], ['Alarmas', 50], ['Observaciones', 82]];

export default function App() {
  return (
    <Page>
      <Global />
      <TitleBar>
        <Logo />
        <TitleText>a3ERP 9.6.8 - PRUEBA_02_CON_DATOS_DEMO</TitleText>
        <WinCtl><Ctl k="min" /><Ctl k="res" /><Ctl k="x" /></WinCtl>
      </TitleBar>
      <Dock>
        <MenuBar>
          <Grip />
          {menus.map(m => <MenuItem key={m}><FolderOpen />{m}</MenuItem>)}
          <MenuLabel>Buscar opción:</MenuLabel>
          <SearchBox><DownTri /></SearchBox>
        </MenuBar>
        <ToolRow $w={399} $h={26} $line="#6f99c8">
          <Grip $mr={9} />
          <ToolItem><TNuevo /><span><U>N</U>uevo</span></ToolItem>
          <ToolItem><TEditar /><span><U>E</U>ditar</span></ToolItem>
          <ToolItem><TBorrar /><span><U>B</U>orrar</span></ToolItem>
          <ToolItem><TExportar /><span>E<U>x</U>portar</span></ToolItem>
          <ToolItem><TBuscar /><span>Busc<U>a</U>r</span></ToolItem>
          <ToolItem><THistorico /><span><U>H</U>istórico</span></ToolItem>
        </ToolRow>
        <ToolRow $w={382} $h={25} $line="#bfdaff" $mt={1}>
          <Grip $mr={4} />
          {tools.map((t, i) => <IconCell key={i}>{t}</IconCell>)}
        </ToolRow>
      </Dock>
      <Main>
        <Sidebar>
          <SideInner>
            <SideHead>Ficheros<LeftChev /></SideHead>
            <Group $open>Mis favoritos<Chevrons up /></Group>
            <FavList>
              {favs.map(([t, ic]) => <FavItem key={t}>{ic}{t}</FavItem>)}
            </FavList>
            {groups.map(g => <Group key={g}>{g}<Chevrons /></Group>)}
            <Spacer />
            <Splitter><Dots /></Splitter>
            {navs.map(([t, k], i) => <NavItem key={t} $active={i === 0}><NavIcon>{nav[k]}</NavIcon>{t}</NavItem>)}
          </SideInner>
          <NavFoot>
            <Monitor /><IvaFree /><Star /><Recycle /><Books size={17} /><Aeat /><Aeat /><Aeat /><DownTri $c="#6a7f9a" />
          </NavFoot>
        </Sidebar>
        <Content>
          <CloseRed>x</CloseRed>
          <Tabs $h={21} $pl={12}>
            <Tab $w={49} $ih={18} $ah={21}>Clientes</Tab>
            <Tab $w={76} $ah={21} $ih={18} $active>Proveedores</Tab>
          </Tabs>
          <Panel>
            <ListHead>
              <IcoProv />
              <ListTitle>Proveedores</ListTitle>
              <TextLabel>Texto:</TextLabel>
              <TextInput><MiniBtn $w={20} $h={21} $plain><Mag /></MiniBtn></TextInput>
              <MiniBtn $w={20} $h={18} $ml={8} $mr={11}><Chevrons c="#4d78a8" /></MiniBtn>
            </ListHead>
            <GroupBand>Mueva aquí las columnas por las que quiera agrupar</GroupBand>
            <GridArea>
              <GridHead>
                <HeadCell $noline><GridMenu /></HeadCell>
                <HeadCell $between>Cód. prov<Sort /></HeadCell>
                <HeadCell>Organización</HeadCell>
                <HeadCell>Teléfono</HeadCell>
                <HeadCell>Población</HeadCell>
              </GridHead>
              <Row $sel>
                <Cell $grey><RowMark /></Cell><Cell $center $grey>1</Cell><Cell>PROSPORTS</Cell><Cell>93.232.23.23</Cell><Cell>BARCELONA</Cell>
              </Row>
              <Row>
                <Cell $grey /><Cell $center $grey>2</Cell><Cell>BICICLETAS, S.A.</Cell><Cell>93.211.11.11</Cell><Cell>BARCELONA</Cell>
              </Row>
              <GridFoot><SumCell>25</SumCell></GridFoot>
            </GridArea>
          </Panel>
        </Content>

        <Dialog>
          <DlgTitle>
            <Logo />
            <DlgTitleText>Empresa de demo - Proveedor : 1/PROSPORTS</DlgTitleText>
            <WinCtl $gap={12}><Ctl k="min" c="#7f8ea0" /><Ctl k="max" c="#7f8ea0" /><Ctl k="x" c="#7f8ea0" /></WinCtl>
          </DlgTitle>
          <DlgBody>
            <Form>
              <CodeRow>
                <FieldLabel $w={86}>Código:</FieldLabel>
                <CodeInput>1</CodeInput>
                <NavBtns>
                  <NavBtn><DocSmall /></NavBtn><NavBtn><First /></NavBtn><NavBtn><Prev /></NavBtn><NavBtn><Next /></NavBtn><NavBtn><Last /></NavBtn><Clip />
                </NavBtns>
              </CodeRow>
              <DescRow>
                <FieldLabel $w={86} $pt={3}>Descripción:</FieldLabel>
                <DescInput><Sel>PROSPORTS</Sel></DescInput>
              </DescRow>
              <Tabs $h={21} $pl={2} $mt={7}>
                {dlgTabs.map(([t, w, a]) => <Tab key={t} $w={w} $active={a} $ah={21} $ih={19} $ib={2}>{t}</Tab>)}
              </Tabs>
              <TabPanel>
                <Tabs $h={22} $pl={1}>
                  <Tab $w={86} $active $ah={22} $ih={18}>Características</Tab>
                  <Tab $w={127} $ah={22} $ih={18}>Campos parametrizables</Tab>
                </Tabs>
                <InnerBox>
                  <FieldRow><FieldLabel $w={191}>Empresa del grupo:</FieldLabel><Combo>Si<ComboBtn><DownTri $c="#222" /></ComboBtn></Combo></FieldRow>
                  <FieldRow><FieldLabel $w={191}>Tipo de proveedores:</FieldLabel><Combo>Distribución de correas y cambios<ComboBtn><DownTri $c="#222" /></ComboBtn></Combo></FieldRow>
                </InnerBox>
              </TabPanel>
              <BtnRow>
                <Btn $w={71}><BtnTrash /><span><U>B</U>orrar</span></Btn>
                <Btn $w={71} $ml={6}><BtnCopy /><span>Duplica<U>r</U></span></Btn>
                <Spacer />
                <Btn $w={90} $off><BtnSave /><span>(F3) <U>G</U>uardar</span></Btn>
                <Btn $w={110} $ml={4} $off><BtnCancel /><span>(Alt+F3) <U>C</U>ancelar</span></Btn>
                <Btn $w={72} $ml={5}><BtnExit /><span><U>S</U>alir</span></Btn>
              </BtnRow>
            </Form>
            <DlgTools>
              <DlgDots />
              <DlgTool><DocStack l="F" c="#e0a828" size={17} /></DlgTool>
              <DlgTool><DocSearch size={18} /></DlgTool>
              <DlgTool><Dth /></DlgTool>
              <DlgTool><BagPrint /></DlgTool>
              <DlgTool><BagP /></DlgTool>
              <LeftTri />
            </DlgTools>
          </DlgBody>
        </Dialog>
      </Main>
      <Status>
        <StatusCell $w={103}>Usuario: SA</StatusCell>
        <StatusCell $w={162} $pl={2} $line="#dcdcdc">Fecha actualización: 28/04/2015</StatusCell>
        <StatusGap />
        <StatusKey $ml={2}>CAPS</StatusKey>
        <StatusKey $ml={8} $on>NUM</StatusKey>
        <StatusKey $ml={7}>SCRL</StatusKey>
        <StatusKey $ml={11} $mr={5}>INS</StatusKey>
      </Status>
      <Taskbar>
        <Slot $w={55}><Orb /></Slot>
        <Slot $w={67}><Ie /></Slot>
        <TaskBtn $w={159} $pl={9} $gap={12}><BigFolder />Pantallas A3erp</TaskBtn>
        <Slot $w={65}><Fox /></Slot>
        <TaskBtn $w={163} $pl={11} $gap={8}><ErpTile>ERP</ErpTile>a3ERP 9.6.8 - PRU...</TaskBtn>
        <TaskBtn $w={156} $pl={9} $gap={8} $on><ErpTile>ERP</ErpTile>Empresa de demo...</TaskBtn>
        <Tray>
          <Lang>ES</Lang>
          <UpTri />
          <WinCtl $gap={9}><Flag /><Net /><Spk /></WinCtl>
          <Clock>18:36<br />15/10/2015</Clock>
          <ShowDesk />
        </Tray>
      </Taskbar>
    </Page>
  );
}
